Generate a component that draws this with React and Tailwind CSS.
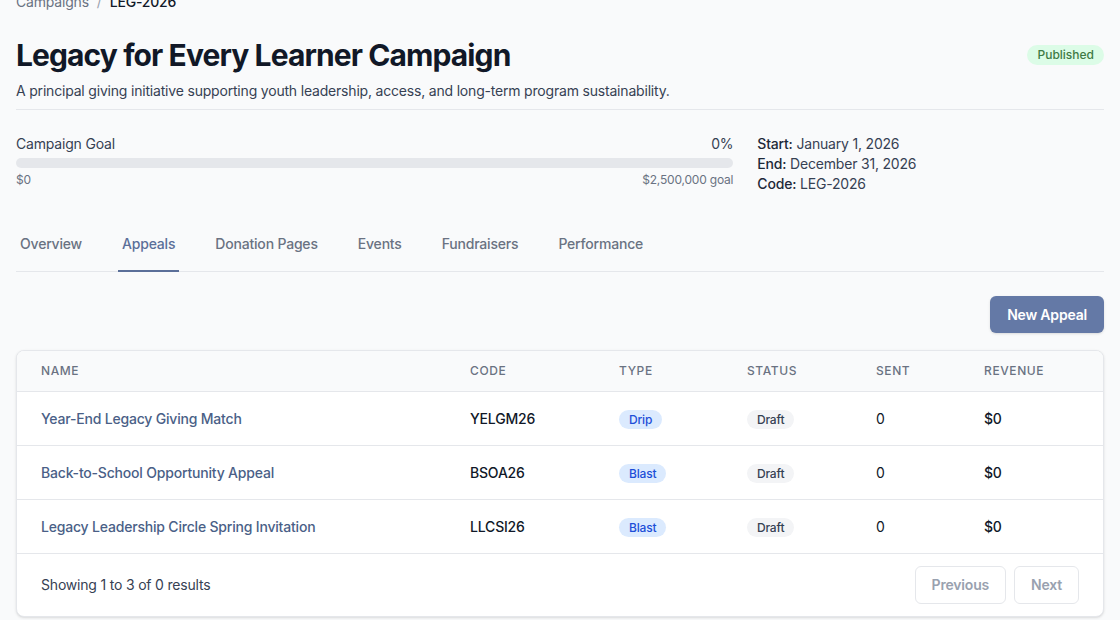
import React from "react";

const rows = [
  { name: "Year-End Legacy Giving Match", code: "YELGM26", type: "Drip" },
  { name: "Back-to-School Opportunity Appeal", code: "BSOA26", type: "Blast" },
  { name: "Legacy Leadership Circle Spring Invitation", code: "LLCSI26", type: "Blast" },
];

const cols = "grid grid-cols-[429px_149px_128px_129px_108px_1fr]";

export default function App() {
  return (
    <div className="bg-[#f9fafb] font-['Inter',sans-serif] tracking-[-0.012em] px-4 overflow-hidden h-[620px]">
      <div className="mt-[-8px] flex items-center gap-2 text-sm leading-5">
        <span className="text-gray-500">Campaigns</span>
        <span className="text-gray-400">/</span>
        <span className="text-gray-900 font-medium">LEG-2026</span>
      </div>

      <div className="mt-[25px] flex items-center justify-between">
        <h1 className="text-3xl leading-9 font-bold text-[#111827] tracking-[-0.03em]">
          Legacy for Every Learner Campaign
        </h1>
        <span className="rounded-full bg-[#dcfce7] px-2.5 py-0.5 text-xs leading-4 font-medium tracking-normal text-[#3f7a45]">
          Published
        </span>
      </div>
      <div className="border-b border-gray-200 pb-2">
        <p className="mt-2 text-sm leading-5 text-gray-700">
          A principal giving initiative supporting youth leadership, access, and long-term program sustainability.
        </p>
      </div>

      <div className="mt-6 grid grid-cols-3 gap-6">
        <div className="col-span-2">
          <div className="flex justify-between text-sm leading-5 text-gray-700">
            <span>Campaign Goal</span>
            <span>0%</span>
          </div>
          <div className="mt-1 h-2.5 w-full rounded-full bg-gray-200"></div>
          <div className="mt-1 flex justify-between text-xs leading-4 text-gray-500">
            <span>$0</span>
            <span>$2,500,000 goal</span>
          </div>
        </div>
        <div className="text-sm leading-5 text-gray-700">
          <div><span className="font-medium text-gray-800">Start:</span> January 1, 2026</div>
          <div><span className="font-medium text-gray-800">End:</span> December 31, 2026</div>
          <div><span className="font-medium text-gray-800">Code:</span> LEG-2026</div>
        </div>
      </div>

      <div className="mt-6 border-b border-gray-200">
        <nav className="flex gap-8 -mb-px">
          {["Overview", "Appeals", "Donation Pages", "Events", "Fundraisers", "Performance"].map((t) => (
            <span
              key={t}
              className={
                "px-1 py-4 text-sm leading-5 font-medium border-b-2 " +
                (t === "Appeals"
                  ? "border-[#5b6f99] text-[#5b6f99]"
                  : "border-transparent text-gray-500")
              }
            >
              {t}
            </span>
          ))}
        </nav>
      </div>

      <div className="mt-6 flex justify-end">
        <button className="h-[37px] rounded-md bg-[#6479a6] px-[17px] text-sm font-semibold text-white shadow-sm">
          New Appeal
        </button>
      </div>

      <div className="mt-[17px] rounded-lg border border-gray-200 bg-white shadow-sm overflow-hidden">
        <div className={cols + " h-[41px] items-center bg-gray-50 border-b border-gray-200 text-xs leading-4 font-medium uppercase tracking-wider text-gray-500"}>
          <div className="px-6">Name</div>
          <div className="px-6">Code</div>
          <div className="px-6">Type</div>
          <div className="px-6">Status</div>
          <div className="px-6">Sent</div>
          <div className="px-6">Revenue</div>
        </div>
        {rows.map((r) => (
          <div key={r.code} className={cols + " h-[54px] items-center border-b border-gray-200 text-sm leading-5"}>
            <div className="px-6 font-medium text-[#4a5f87]">{r.name}</div>
            <div className="px-6 font-medium text-gray-900">{r.code}</div>
            <div className="px-6">
              <span className="rounded-full bg-[#dbeafe] px-2.5 py-0.5 text-xs leading-4 font-medium text-[#1d4ed8]">
                {r.type}
              </span>
            </div>
            <div className="px-6">
              <span className="rounded-full bg-gray-100 px-2.5 py-0.5 text-xs leading-4 font-medium text-gray-700">
                Draft
              </span>
            </div>
            <div className="px-6 text-gray-900">0</div>
            <div className="px-6 font-medium text-gray-900">$0</div>
          </div>
        ))}
        <div className="flex items-center justify-between px-6 py-3">
          <span className="text-sm leading-5 text-gray-700">Showing 1 to 3 of 0 results</span>
          <div className="flex gap-2">
            <button className="rounded-md border border-gray-200 bg-white px-4 py-2 text-sm leading-5 font-semibold text-gray-400">
              Previous
            </button>
            <button className="rounded-md border border-gray-200 bg-white px-4 py-2 text-sm leading-5 font-semibold text-gray-400">
              Next
            </button>
          </div>
        </div>
      </div>
    </div>
  );
}
